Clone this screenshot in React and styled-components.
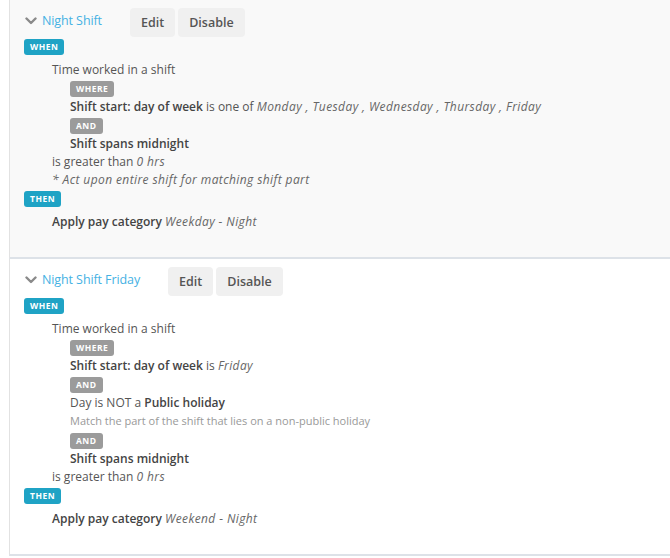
import React from 'react';
import styled, { createGlobalStyle } from 'styled-components';

const GlobalStyle = createGlobalStyle`
    body {
        margin: 0;
        background: #ffffff;
        font-family: "Open Sans", "Liberation Sans", sans-serif;
        font-size: 12px;
        color: #555;
    }
`;

const rules = [
    {
        title: 'Night Shift',
        shaded: true,
        conditions: [
            { badge: 'WHERE', field: 'Shift start: day of week', op: 'is one of', values: 'Monday , Tuesday , Wednesday , Thursday , Friday' },
            { badge: 'AND', field: 'Shift spans midnight' },
        ],
        note: '* Act upon entire shift for matching shift part',
        category: 'Weekday - Night',
    },
    {
        title: 'Night Shift Friday',
        shaded: false,
        conditions: [
            { badge: 'WHERE', field: 'Shift start: day of week', op: 'is', values: 'Friday' },
            { badge: 'AND', prefix: 'Day is NOT a', field: 'Public holiday', hint: 'Match the part of the shift that lies on a non-public holiday' },
            { badge: 'AND', field: 'Shift spans midnight' },
        ],
        category: 'Weekend - Night',
    },
];

const Chevron = () => (
    <svg width="12" height="8" viewBox="0 0 12 8">
        <path d="M1.5 1.5 L6 6 L10.5 1.5" fill="none" stroke="#8a8a8a" strokeWidth="2.4" strokeLinecap="round" strokeLinejoin="round" />
    </svg>
);

const Rule = ({ rule }) => (
    <Panel $shaded={rule.shaded}>
        <Header>
            <Title>
                <Chevron />
                <span>{rule.title}</span>
            </Title>
            <Button>Edit</Button>
            <Button>Disable</Button>
        </Header>
        <Badge $tone="teal" $top>WHEN</Badge>
        <Block>
            <Line>Time worked in a shift</Line>
            <Nested>
                {rule.conditions.map((c, i) => (
                    <React.Fragment key={i}>
                        <Badge $tone="gray">{c.badge}</Badge>
                        <Line>
                            {c.prefix && <>{c.prefix} </>}
                            <Strong>{c.field}</Strong>
                            {c.op && <> {c.op} </>}
                            {c.values && <Value>{c.values}</Value>}
                        </Line>
                        {c.hint && <Hint>{c.hint}</Hint>}
                    </React.Fragment>
                ))}
            </Nested>
            <Line>is greater than <Value>0 hrs</Value></Line>
            {rule.note && <Line><Value>{rule.note}</Value></Line>}
        </Block>
        <Badge $tone="teal" $top>THEN</Badge>
        <Block>
            <Line><Strong>Apply pay category</Strong> <Value>{rule.category}</Value></Line>
        </Block>
    </Panel>
);

const App = () => (
    <>
        <GlobalStyle />
        <List>
            {rules.map((r) => <Rule key={r.title} rule={r} />)}
        </List>
    </>
);

const List = styled.div`
    margin-left: 9px;
    width: 661px;
`;

const Panel = styled.section`
    background: ${(p) => (p.$shaded ? '#f9f9f9' : '#ffffff')};
    border-left: 1px solid #e2e2e2;
    border-bottom: 2px solid #dde2e8;
    padding: 8px 0 26px 14px;
    display: flex;
    flex-direction: column;
    align-items: flex-start;
`;

const Header = styled.div`
    display: flex;
    align-items: flex-start;
    gap: 3px;
    height: 29px;
`;

const Title = styled.div`
    display: flex;
    align-items: center;
    gap: 5px;
    margin: 4px 25px 0 1px;
    color: #45b1e3;
    font-size: 12.5px;
    line-height: 18px;
    letter-spacing: -0.1px;
    svg {
        flex-shrink: 0;
    }
`;

const Button = styled.button`
    height: 29px;
    padding: 0 11px;
    border: none;
    border-radius: 4px;
    background: #f0f0f0;
    color: #555;
    font-family: inherit;
    font-size: 12.5px;
    font-weight: 600;
    cursor: pointer;
`;

const Badge = styled.span`
    display: inline-block;
    height: 16px;
    line-height: 16px;
    padding: 0 6px;
    margin: ${(p) => (p.$top ? '2px 0 6px' : '2px 0 1px')};
    border-radius: 3px;
    background: ${(p) => (p.$tone === 'teal' ? '#1fa3c5' : '#9b9b9b')};
    color: #fff;
    font-size: 8.5px;
    font-weight: 700;
    letter-spacing: 0.5px;
`;

const Block = styled.div`
    padding-left: 28px;
    display: flex;
    flex-direction: column;
    align-items: flex-start;
`;

const Nested = styled.div`
    padding-left: 18px;
    display: flex;
    flex-direction: column;
    align-items: flex-start;
`;

const Line = styled.div`
    line-height: 18px;
    white-space: nowrap;
`;

const Strong = styled.span`
    color: #444;
    font-weight: 600;
`;

const Value = styled.em`
    color: #666;
    letter-spacing: 0.4px;
`;

const Hint = styled.div`
    line-height: 17px;
    font-size: 11px;
    color: #999;
    margin-bottom: 2px;
`;

export default App;
